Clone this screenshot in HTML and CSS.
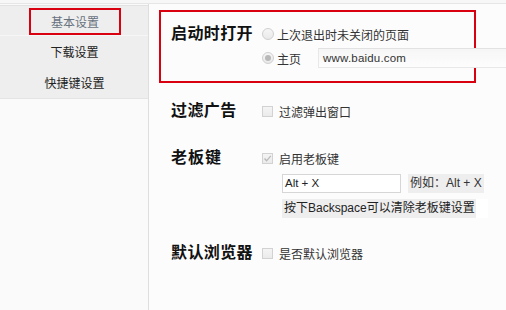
FILE: index.html
```html
<!DOCTYPE html>
<html>
<head>
<meta charset="utf-8">
<link rel="stylesheet" href="styles.css">
</head>
<body>
<div class="topline"></div>
<div class="page">
  <aside class="sidebar">
    <ul class="menu">
      <li class="item active"><span class="mark">基本设置</span></li>
      <li class="item">下载设置</li>
      <li class="item">快捷键设置</li>
    </ul>
  </aside>
  <main class="main">
    <section class="group startup">
      <div class="label">启动时打开</div>
      <div class="controls">
        <div class="row"><span class="radio"></span><span class="rtext">上次退出时未关闭的页面</span></div>
        <div class="row"><span class="radio on"></span><span class="rtext">主页</span><span class="url">www.baidu.com</span></div>
      </div>
    </section>
    <section class="group ads">
      <div class="label">过滤广告</div>
      <div class="controls">
        <div class="row"><span class="check"></span><span class="ctext">过滤弹出窗口</span></div>
      </div>
    </section>
    <section class="group boss">
      <div class="label spaced">老板键</div>
      <div class="controls">
        <div class="row"><span class="check on"><svg viewBox="0 0 11 11" width="11" height="11"><path d="M2.5 5.5 L4.6 7.8 L8.8 2.8" fill="none" stroke="#b9b9b9" stroke-width="1.3"/></svg></span><span class="ctext">启用老板键</span></div>
        <div class="keyrow"><span class="keybox">Alt + X</span><span class="hint">例如：Alt + X</span></div>
        <div class="tiprow"><span class="tip">按下Backspace可以清除老板键设置</span><span class="tipend"></span></div>
      </div>
    </section>
    <section class="group browser">
      <div class="label">默认浏览器</div>
      <div class="controls">
        <div class="row"><span class="check"></span><span class="ctext">是否默认浏览器</span></div>
      </div>
    </section>
  </main>
</div>
</body>
</html>
```
FILE: styles.css
```css
html, body {
  margin: 0;
  padding: 0;
}
body {
  width: 506px;
  height: 310px;
  overflow: hidden;
  background: #fcfcfc;
  font-family: "Liberation Sans", "Noto Sans CJK SC", sans-serif;
  font-size: 12px;
  color: #333;
}
.topline {
  height: 3px;
  border-bottom: 1px solid #e6e6e6;
  background: #f7f7f7;
}
.page {
  display: flex;
  height: 306px;
}
.sidebar {
  width: 148px;
  border-right: 1px solid #dedede;
  background: #fafafa;
  flex: none;
}
.menu {
  list-style: none;
  margin: 0;
  padding: 0;
  margin-top: 1px;
  background: #eeeeee;
  border-top: 1px solid #e2e2e2;
  border-bottom: 1px solid #e4e4e4;
}
.item {
  height: 31px;
  display: flex;
  align-items: center;
  justify-content: center;
  font-size: 12px;
  color: #222;
  padding-left: 1px;
}
.item.active {
  height: 29px;
  border-bottom: 1px solid #f6f6f6;
  color: #68727e;
  align-items: flex-start;
}
.mark {
  box-sizing: border-box;
  width: 92px;
  height: 27px;
  margin-top: 2px;
  margin-left: 1px;
  border: 2px solid #d9000f;
  display: flex;
  align-items: center;
  justify-content: center;
  font-size: 12px;
}
.main {
  flex: 1;
  min-width: 0;
  background: #fcfcfc;
  padding-top: 6px;
}
.group {
  display: grid;
  grid-template-columns: 91px auto;
  padding-left: 22px;
}
.label {
  font-size: 16px;
  font-weight: bold;
  color: #111;
  height: 20px;
  line-height: 20px;
  letter-spacing: 0.4px;
  white-space: nowrap;
}
.label.spaced {
  letter-spacing: 1px;
}
.controls {
  display: flex;
  flex-direction: column;
}
.row {
  height: 20px;
  display: flex;
  align-items: center;
  white-space: nowrap;
}
.startup {
  box-sizing: border-box;
  width: 317px;
  margin-left: 10px;
  padding: 12px 0 13px 10px;
  border: 2px solid #d9000f;
}
.startup .controls {
  gap: 4px;
}
.radio {
  box-sizing: border-box;
  width: 12px;
  height: 12px;
  border-radius: 50%;
  border: 1px solid #cfcfcf;
  background: linear-gradient(#f6f6f6, #e9e9e9);
  display: flex;
  align-items: center;
  justify-content: center;
  flex: none;
}
.radio.on::after {
  content: "";
  width: 6px;
  height: 6px;
  border-radius: 50%;
  background: #b8b8b8;
}
.rtext {
  margin-left: 3px;
  color: #333;
}
.url {
  box-sizing: border-box;
  width: 200px;
  height: 20px;
  margin-left: 17px;
  padding-left: 4px;
  border-top: 1px solid #e2e2e2;
  border-left: 1px solid #e8e8e8;
  border-bottom: 1px solid #e8e8e8;
  background: linear-gradient(#f6f6f6, #fdfdfd);
  line-height: 18px;
  font-size: 11.5px;
  letter-spacing: 0.2px;
  color: #333;
  flex: none;
}
.check {
  box-sizing: border-box;
  width: 11px;
  height: 11px;
  border: 1px solid #d2d2d2;
  background: linear-gradient(#f4f4f4, #ebebeb);
  flex: none;
  display: flex;
}
.check svg {
  margin: -1px;
}
.ctext {
  margin-left: 6px;
  color: #333;
}
.ads {
  margin-top: 18px;
}
.boss {
  margin-top: 27px;
}
.keyrow {
  margin-top: 6px;
  margin-left: 20px;
  display: flex;
  height: 19px;
}
.keybox {
  box-sizing: border-box;
  width: 119px;
  height: 19px;
  border: 1px solid #d6d6d6;
  background: #fff;
  padding-left: 2px;
  line-height: 17px;
  font-size: 11.5px;
  color: #222;
}
.hint {
  box-sizing: border-box;
  width: 76px;
  height: 19px;
  margin-left: 7px;
  background: #eeeeee;
  padding-left: 2px;
  line-height: 19px;
  font-size: 12px;
  color: #333;
  white-space: nowrap;
}
.tiprow {
  margin-top: 6px;
  margin-left: 20px;
  display: flex;
  height: 19px;
}
.tip {
  box-sizing: border-box;
  height: 19px;
  background: #eeeeee;
  padding: 0 1px 0 2px;
  line-height: 19px;
  font-size: 12px;
  color: #222;
  white-space: nowrap;
}
.tipend {
  width: 12px;
  height: 19px;
  background: #ffffff;
}
.browser {
  margin-top: 25px;
}
```
